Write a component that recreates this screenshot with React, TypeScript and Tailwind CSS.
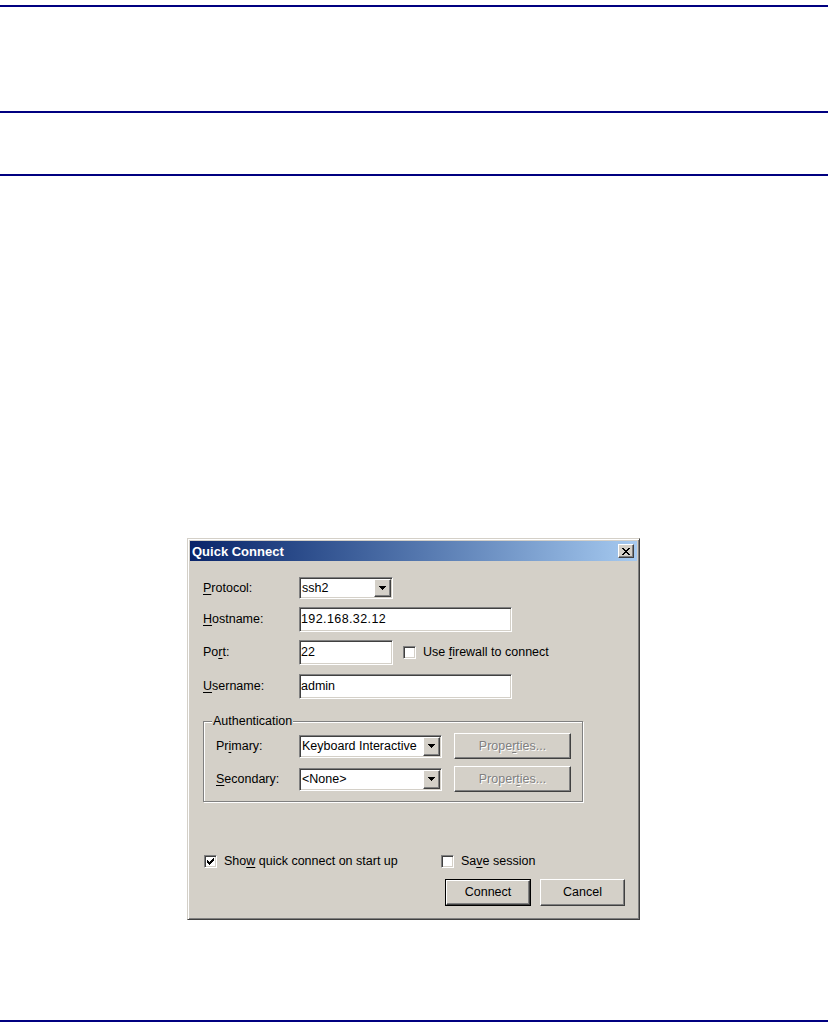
import type { ReactNode } from 'react';

const sunken =
  'border border-t-[#808080] border-l-[#808080] border-r-white border-b-white shadow-[inset_1px_1px_0_#404040,inset_-1px_-1px_0_#d4d0c8]';
const raised =
  'border border-t-white border-l-white border-r-[#404040] border-b-[#404040] shadow-[inset_-1px_-1px_0_#808080] bg-[#d4d0c8]';

const U = ({ children }: { children: ReactNode }) => (
  <span className="underline decoration-1 underline-offset-[2px]">{children}</span>
);

// pixel glyphs, one string per row
const Pixels = ({ rows, color = '#000' }: { rows: string[]; color?: string }) => (
  <svg width={rows[0].length} height={rows.length} shapeRendering="crispEdges">
    {rows.flatMap((row, y) =>
      row.split('').map((c, x) => (c === '#' ? <rect key={`${x}-${y}`} x={x} y={y} width={1} height={1} fill={color} /> : null))
    )}
  </svg>
);

const ARROW = ['#######', '.#####.', '..###..', '...#...'];
const CLOSE_X = ['##....##', '.##..##.', '..####..', '...##...', '..####..', '.##..##.', '##....##'];
const CHECK = ['......#', '.....##', '#...###', '##.###.', '#####..', '.###...', '..#....'];

const Combo = ({ value, className }: { value: string; className: string }) => (
  <div className={`flex items-stretch bg-white p-[1px] ${sunken} ${className}`}>
    <div className="flex flex-1 items-center overflow-hidden whitespace-nowrap pl-[1px]">{value}</div>
    <div className={`flex w-[17px] items-center justify-center ${raised}`}>
      <Pixels rows={ARROW} />
    </div>
  </div>
);

const Field = ({ value, className }: { value: string; className: string }) => (
  <div className={`flex items-center bg-white pl-[1px] ${sunken} ${className}`}>{value}</div>
);

const Check = ({ checked }: { checked?: boolean }) => (
  <div className={`flex h-[13px] w-[13px] shrink-0 items-center justify-center bg-white ${sunken}`}>
    {checked && <Pixels rows={CHECK} />}
  </div>
);

const DisabledButton = ({ children }: { children: ReactNode }) => (
  <div
    className={`ml-[12px] flex h-[26px] w-[117px] items-center justify-center text-[#808080] [text-shadow:1px_1px_0_#fff] ${raised}`}
  >
    {children}
  </div>
);

const Label = ({ children, className }: { children: ReactNode; className: string }) => (
  <span className={`shrink-0 ${className}`}>{children}</span>
);

const QuickConnect = () => (
  <div className="ml-[187px] h-[382px] w-[453px] border border-t-[#d4d0c8] border-l-[#d4d0c8] border-r-[#404040] border-b-[#404040] bg-[#d4d0c8] p-[2px] shadow-[inset_1px_1px_0_#fff,inset_-1px_-1px_0_#808080]">
    <div className="flex h-[20px] items-center justify-between bg-linear-to-r from-[#0a246a] to-[#a6caf0] pl-[2px] pr-[3px]">
      <span className="text-[13px] font-bold leading-none text-white">Quick Connect</span>
      <div className={`flex h-[14px] w-[16px] items-center justify-center ${raised}`}>
        <Pixels rows={CLOSE_X} />
      </div>
    </div>

    <div className="pl-[13px]">
      <div className="mt-[16px] flex h-[22px] items-center">
        <Label className="w-[96px]">
          <U>P</U>rotocol:
        </Label>
        <Combo value="ssh2" className="h-[22px] w-[94px]" />
      </div>

      <div className="mt-[8px] flex h-[25px] items-center">
        <Label className="w-[96px]">
          <U>H</U>ostname:
        </Label>
        <Field value="192.168.32.12" className="h-[25px] w-[213px] tracking-[0.4px]" />
      </div>

      <div className="mt-[8px] flex h-[25px] items-center">
        <Label className="w-[96px]">
          Po<U>r</U>t:
        </Label>
        <Field value="22" className="h-[25px] w-[94px]" />
        <div className="ml-[10px] flex items-center gap-[7px]">
          <Check />
          <span>
            Use <U>f</U>irewall to connect
          </span>
        </div>
      </div>

      <div className="mt-[9px] flex h-[25px] items-center">
        <Label className="w-[96px]">
          <U>U</U>sername:
        </Label>
        <Field value="admin" className="h-[25px] w-[213px]" />
      </div>

      <fieldset className="mt-[15px] w-[380px] border border-[#808080] pb-[9px] shadow-[1px_1px_0_#fff,inset_1px_1px_0_#fff]">
        <legend className="ml-[8px] bg-[#d4d0c8] px-[1px] leading-[14px]">Authentication</legend>
        <div className="mt-[5px] flex h-[26px] items-center pl-[12px]">
          <Label className="w-[83px]">
            Pr<U>i</U>mary:
          </Label>
          <Combo value="Keyboard Interactive" className="h-[23px] w-[143px]" />
          <DisabledButton>
            Prope<U>r</U>ties...
          </DisabledButton>
        </div>
        <div className="mt-[7px] flex h-[26px] items-center pl-[12px]">
          <Label className="w-[83px]">
            <U>S</U>econdary:
          </Label>
          <Combo value="<None>" className="h-[23px] w-[143px]" />
          <DisabledButton>
            Proper<U>t</U>ies...
          </DisabledButton>
        </div>
      </fieldset>

      <div className="mt-[53px] flex h-[13px] items-center pl-[1px]">
        <div className="flex w-[237px] items-center gap-[7px]">
          <Check checked />
          <span>
            Sho<U>w</U> quick connect on start up
          </span>
        </div>
        <div className="flex items-center gap-[7px]">
          <Check />
          <span>
            Sa<U>v</U>e session
          </span>
        </div>
      </div>
    </div>

    <div className="mt-[11px] flex justify-end gap-[9px] pr-[12px]">
      <div className="h-[27px] w-[86px] border border-black">
        <div className={`flex h-full w-full items-center justify-center ${raised}`}>Connect</div>
      </div>
      <div className={`flex h-[27px] w-[85px] items-center justify-center ${raised}`}>Cancel</div>
    </div>
  </div>
);

export default function App() {
  return (
    <div className="min-h-[1031px] bg-white pt-[5px] font-['Liberation_Sans',Arial,sans-serif] text-[12.5px] text-black">
      <div className="h-[2px] bg-[#000080]" />
      <div className="mt-[104px] h-[2px] bg-[#000080]" />
      <div className="mt-[61px] h-[2px] bg-[#000080]" />
      <div className="mt-[362px]">
        <QuickConnect />
      </div>
      <div className="mt-[100px] h-[2px] bg-[#000080]" />
    </div>
  );
}
